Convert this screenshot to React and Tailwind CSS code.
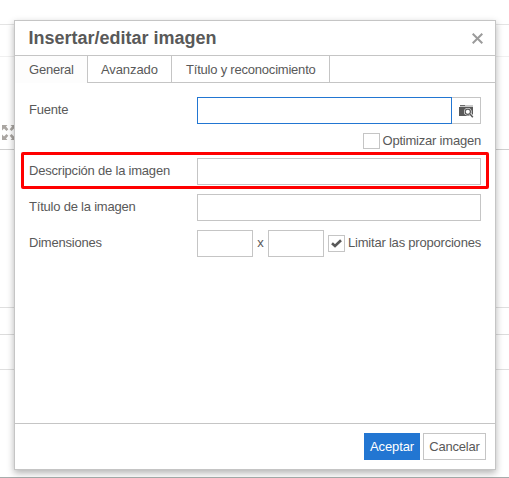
import React from "react";

function Backdrop() {
  return (
    <div className="flex h-[478px] flex-col">
      <div className="h-[25px] shrink-0 border-b border-[#e4e4e4]" />
      <div className="h-8 shrink-0 border-b border-[#f0f0f0]" />
      <div className="flex h-[93px] shrink-0 items-end border-b border-[#cfcfcf] pb-[9px] pl-[2px]">
        <svg width="14" height="15" viewBox="0 0 14 15" fill="#aaa6a2">
          <path d="M0 0h5.5L4 1.6 6.3 4.2 4.5 6 2 3.6 0 5.5zM14 0v5.5l-2-1.9L9.5 6 7.7 4.2 10 1.6 8.5 0zM0 15V9.5l2 1.9L4.5 9l1.8 1.8L4 13.4 5.5 15zM14 15H8.5l1.5-1.6-2.3-2.6L9.5 9l2.5 2.4 2-1.9z" />
        </svg>
      </div>
      <div className="h-[158px] shrink-0 border-b border-[#dfdfdf]" />
      <div className="h-[27px] shrink-0 border-b border-[#dcdcdc]" />
      <div className="h-[35px] shrink-0 border-b border-[#dfdfdf]" />
      <div className="h-[108px] shrink-0 border-b border-[#a6adac]" />
    </div>
  );
}

function Row({ label, children }) {
  return (
    <div className="flex h-[27px] items-center">
      <label className="w-[168px] shrink-0 whitespace-nowrap pb-[2px]">{label}</label>
      {children}
    </div>
  );
}

const box = "h-[27px] shrink-0 border border-[#c5c5c5] bg-white outline-none";

function Check({ label, checked }) {
  return (
    <div className="flex items-center whitespace-nowrap">
      <span
        className={`flex w-[17px] shrink-0 items-center justify-center border border-[#c5c5c5] bg-white ${
          checked ? "mr-[3px] h-[17px]" : "mr-[2px] h-4"
        }`}
      >
        {checked && (
          <svg width="11" height="9" viewBox="0 0 11 9" fill="none" stroke="#595959" strokeWidth="2.6">
            <path d="M1 4.2 4 7 10 1.2" />
          </svg>
        )}
      </span>
      <span className={checked ? "pb-[2px]" : ""}>{label}</span>
    </div>
  );
}

export default function App() {
  return (
    <div className="relative h-[478px] w-[509px] overflow-hidden bg-white font-['Liberation_Sans',Arial,sans-serif] text-[13px] leading-4 tracking-[-0.21px] text-[#595959]">
      <Backdrop />
      <div className="absolute left-[14px] top-5 flex h-[450px] w-[482px] flex-col border border-[#c5c5c5] bg-white shadow-[0_3px_7px_rgba(0,0,0,0.3)]">
        <header className="flex h-[35px] shrink-0 items-center justify-between border-b border-[#c5c5c5] pl-[13.5px] pr-3">
          <h1 className="text-[18px] font-bold leading-6 tracking-normal">Insertar/editar imagen</h1>
          <svg width="11" height="11" viewBox="0 0 11 11" stroke="#9b9b9b" strokeWidth="2">
            <path d="M.7.7 10.3 10.3M10.3.7.7 10.3" />
          </svg>
        </header>
        <nav className="flex h-[27px] shrink-0 whitespace-nowrap">
          <div className="w-[73px] border-r border-[#c5c5c5] bg-[#fdfdfd] pl-[14px] pt-[6px]">General</div>
          <div className="w-[84px] border-b border-r border-[#c5c5c5] pl-[13px] pt-[6px] tracking-[-0.1px]">Avanzado</div>
          <div className="w-[158px] border-b border-r border-[#c5c5c5] pl-[14px] pt-[6px]">Título y reconocimiento</div>
          <div className="flex-1 border-b border-[#c5c5c5]" />
        </nav>
        <main className="flex flex-1 flex-col pl-[14px] pr-[14px] pt-[14px]">
          <Row label="Fuente">
            <input className="h-[27px] w-[255px] border border-[#2276d2] bg-white outline-none" />
            <button className={`${box} flex w-[29px] items-center justify-center border-l-0`}>
              <svg width="15" height="14" viewBox="0 0 15 14" fill="none">
                <path d="M0 3h14v9H0z" fill="#595959" />
                <path d="M1 1h13v2H1z" fill="#c9c9c9" />
                <path d="M1 1h5v1H1z" fill="#6b6b6b" />
                <circle cx="8.8" cy="7.8" r="3.8" fill="#fff" />
                <circle cx="8.8" cy="7.8" r="2.6" stroke="#595959" strokeWidth="1.2" />
                <path d="m11 10 3 3" stroke="#fff" strokeWidth="3" />
                <path d="m10.8 9.8 3 3.4" stroke="#595959" strokeWidth="1.6" />
              </svg>
            </button>
          </Row>
          <div className="mt-[9px] flex h-4 items-center justify-end">
            <Check label="Optimizar imagen" />
          </div>
          <div className="-mx-2 mt-[3px] flex h-[37px] items-start rounded-[2px] border-[3px] border-[#ff0000] pl-[5px] pt-[3px]">
            <Row label="Descripción de la imagen">
              <input className={`${box} w-[284px]`} />
            </Row>
          </div>
          <div className="mt-[5px]">
            <Row label="Título de la imagen">
              <input className={`${box} w-[284px]`} />
            </Row>
          </div>
          <div className="mt-[9px]">
            <Row label="Dimensiones">
              <input className={`${box} w-14`} />
              <span className="w-[15px] shrink-0 pb-[2px] text-center">x</span>
              <input className={`${box} mr-1 w-14`} />
              <Check label="Limitar las proporciones" checked />
            </Row>
          </div>
        </main>
        <footer className="flex h-[46px] shrink-0 justify-end gap-[3px] border-t border-[#c5c5c5] pr-[9px] pt-[9px]">
          <button className="h-[27px] w-14 bg-[#2276d2] tracking-[-0.1px] text-white">Aceptar</button>
          <button className={`${box} w-[63px]`}>Cancelar</button>
        </footer>
      </div>
    </div>
  );
}
